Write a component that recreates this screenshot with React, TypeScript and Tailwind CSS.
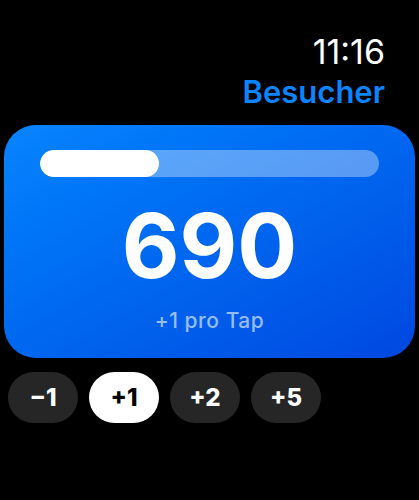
import { useState } from 'react'

const steps = [-1, 1, 2, 5]

function StepButton({ value, active, onClick }: { value: number; active: boolean; onClick: () => void }) {
  const label = value < 0 ? `\u2212${Math.abs(value)}` : `+${value}`
  return (
    <button
      onClick={onClick}
      className={
        active
          ? 'w-[70px] h-[51px] rounded-full bg-white text-black text-[24px] font-extrabold'
          : 'w-[70px] h-[51px] rounded-full bg-[#262626] text-white text-[24px] font-extrabold'
      }
    >
      {label}
    </button>
  )
}

export default function App() {
  const [count, setCount] = useState(690)
  const [step, setStep] = useState(1)
  const progress = 0.35

  return (
    <div className="w-[419px] h-[500px] bg-black text-white font-['Inter',sans-serif] overflow-hidden">
      <div className="flex flex-col items-end pr-[34px] pt-[32px]">
        <div className="text-[34px] leading-[40px] font-normal">11:16</div>
        <div className="text-[31px] leading-[40px] font-semibold text-[#0a84ff]">Besucher</div>
      </div>

      <div
        onClick={() => setCount(count + step)}
        className="mx-[4px] mt-[13px] h-[233px] rounded-[32px] bg-gradient-to-br from-[#0a84ff] to-[#0047e0] flex flex-col items-center px-[36px] pt-[25px]"
      >
        <div className="w-full h-[27px] rounded-full bg-white/35 overflow-hidden">
          <div className="h-full rounded-full bg-white" style={{ width: `${progress * 100}%` }} />
        </div>
        <div className="mt-[16px] text-[89px] leading-[106px] font-bold">{count}</div>
        <div className="mt-[9px] text-[21px] leading-[26px] font-medium tracking-wide text-white/60">+{step} pro Tap</div>
      </div>

      <div className="flex gap-[11px] px-[8px] mt-[14px]">
        {steps.map((s) => (
          <StepButton key={s} value={s} active={s === step} onClick={() => setStep(s)} />
        ))}
      </div>
    </div>
  )
}
